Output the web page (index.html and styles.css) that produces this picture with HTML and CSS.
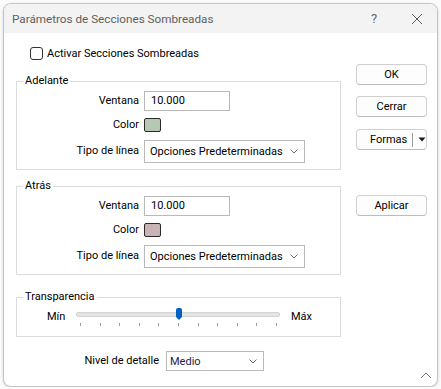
FILE: index.html
```html
<!DOCTYPE html>
<html lang="es">
<head>
    <meta charset="UTF-8">
    <title>Parámetros de Secciones Sombreadas</title>
    <link rel="stylesheet" href="styles.css">
</head>
<body>
<div class="dialog">
    <div class="titlebar">
        <span class="title">Parámetros de Secciones Sombreadas</span>
        <span class="help">?</span>
        <span class="close">
            <svg width="12" height="12" viewBox="0 0 12 12"><path d="M1 1 L11 11 M11 1 L1 11" stroke="#5c5c5c" stroke-width="1" fill="none"/></svg>
        </span>
    </div>

    <div class="content">
        <div class="main">
            <label class="check"><span class="box"></span>Activar Secciones Sombreadas</label>

            <fieldset class="group">
                <legend>Adelante</legend>
                <div class="rows">
                    <span class="lbl">Ventana</span>
                    <div class="field">10.000</div>
                    <span class="lbl">Color</span>
                    <span class="swatch green"></span>
                    <span class="lbl">Tipo de línea</span>
                    <div class="select wide"><span>Opciones Predeterminadas</span>
                        <svg class="chev" width="8" height="5" viewBox="0 0 8 5"><path d="M0.5 0.5 L4 4 L7.5 0.5" stroke="#6a6a6a" fill="none"/></svg>
                    </div>
                </div>
            </fieldset>

            <fieldset class="group">
                <legend>Atrás</legend>
                <div class="rows">
                    <span class="lbl">Ventana</span>
                    <div class="field">10.000</div>
                    <span class="lbl">Color</span>
                    <span class="swatch rose"></span>
                    <span class="lbl">Tipo de línea</span>
                    <div class="select wide"><span>Opciones Predeterminadas</span>
                        <svg class="chev" width="8" height="5" viewBox="0 0 8 5"><path d="M0.5 0.5 L4 4 L7.5 0.5" stroke="#6a6a6a" fill="none"/></svg>
                    </div>
                </div>
            </fieldset>

            <fieldset class="group trans">
                <legend>Transparencia</legend>
                <div class="slider-row">
                    <span class="end min">Mín</span>
                    <div class="slider">
                        <div class="track"><span class="thumb"></span></div>
                        <div class="ticks">
                            <i></i><i></i><i></i><i></i><i></i><i></i><i></i><i></i><i></i><i></i><i></i>
                        </div>
                    </div>
                    <span class="end">Máx</span>
                </div>
            </fieldset>

            <div class="detail">
                <span class="lbl">Nivel de detalle</span>
                <div class="select small"><span class="sel-text">Medio</span>
                    <svg class="chev" width="8" height="5" viewBox="0 0 8 5"><path d="M0.5 0.5 L4 4 L7.5 0.5" stroke="#6a6a6a" fill="none"/></svg>
                </div>
            </div>
        </div>

        <div class="side">
            <button class="btn ok">OK</button>
            <button class="btn cerrar">Cerrar</button>
            <button class="btn formas"><span class="btn-label">Formas</span><span class="split"></span>
                <svg width="8" height="5" viewBox="0 0 8 5"><path d="M0.5 0.5 L7.5 0.5 L4 4.5 Z" fill="#1a1a1a"/></svg>
            </button>
            <button class="btn aplicar">Aplicar</button>
        </div>
    </div>

    <svg class="grip" width="12" height="7" viewBox="0 0 12 7"><path d="M1 6 L6 1 L11 6" stroke="#777" fill="none"/></svg>
</div>
</body>
</html>
```

FILE: styles.css
```css
body {
    margin: 0;
    background: #fbfbfb;
    font-family: 'Roboto', 'Open Sans', sans-serif;
    font-size: 11px;
    color: #000;
}

.dialog {
    position: relative;
    margin: 3px 0 0 3px;
    width: 433px;
    height: 382px;
    background: #fff;
    border: 1px solid #c4c4c4;
    border-radius: 8px;
    box-shadow: 0 1px 3px rgba(0, 0, 0, 0.15);
    overflow: hidden;
}

.titlebar {
    display: flex;
    align-items: center;
    height: 29px;
    background: #f3f3f3;
    padding-left: 8px;
    color: #5f5f5f;
    font-size: 11.7px;
}
.title {
    flex: 1;
}
.help {
    width: 12px;
    margin-right: 28px;
    font-size: 13px;
    color: #6a6a6a;
}
.close {
    display: flex;
    margin-right: 14px;
}

.content {
    display: flex;
    gap: 15px;
    padding: 12px 0 0 12px;
}

.main {
    width: 325px;
    display: flex;
    flex-direction: column;
}

.check {
    display: flex;
    align-items: center;
    gap: 4px;
    height: 16px;
    margin-left: 14px;
}
.box {
    width: 11px;
    height: 11px;
    border: 1px solid #333;
    border-radius: 3px;
    background: #fff;
}

.group {
    margin: 12px 0 0;
    padding: 2px 0 6px;
    border: 1px solid #dcdcdc;
    border-radius: 0;
}
.group + .group {
    margin-top: 8px;
}
.group legend {
    margin-left: 6px;
    padding: 0 2px;
    line-height: 16px;
}
.group.trans {
    margin-top: 14px;
    padding: 3px 0 10px;
}

.rows {
    display: grid;
    grid-template-columns: 122px auto;
    column-gap: 5px;
    row-gap: 6px;
    align-items: center;
    justify-items: start;
}
.lbl {
    justify-self: end;
    line-height: 16px;
}

.field {
    width: 78px;
    height: 18px;
    line-height: 18px;
    padding-left: 6px;
    border: 1px solid #b9b9b9;
}

.swatch {
    width: 15px;
    height: 12px;
    border: 1px solid #2a2a2a;
    border-radius: 2px;
}
.swatch.green {
    background: #b4c8b4;
}
.swatch.rose {
    background: #c8b4b4;
}

.select {
    display: flex;
    align-items: center;
    justify-content: space-between;
    height: 20px;
    padding: 0 6px 0 5px;
    border: 1px solid #b9b9b9;
    background: #fff;
    white-space: nowrap;
}
.select.wide {
    width: 148px;
    height: 21px;
    margin-top: 1px;
}
.select.small {
    width: 87px;
    height: 18px;
    padding-left: 3px;
}
.sel-text {
    color: #1c1c4a;
}

.slider-row {
    display: flex;
    align-items: flex-start;
    padding-left: 30px;
}
.end {
    line-height: 16px;
    margin-top: 1px;
}
.end.min {
    width: 29px;
}
.slider {
    width: 204px;
    margin-right: 11px;
}
.track {
    position: relative;
    height: 3px;
    margin-top: 4px;
    background: #e4e4e4;
    border: 1px solid #d4d4d4;
    border-radius: 2px;
}
.thumb {
    position: absolute;
    left: 99px;
    top: -5px;
    width: 6px;
    height: 9px;
    background: #0063c4;
    border-radius: 2px 2px 0 0;
}
.thumb::after {
    content: '';
    position: absolute;
    left: 0;
    top: 9px;
    border-left: 3px solid transparent;
    border-right: 3px solid transparent;
    border-top: 3px solid #0063c4;
}
.ticks {
    display: flex;
    justify-content: space-between;
    padding: 0 3px 0 4px;
    margin-top: 6px;
}
.ticks i {
    display: block;
    width: 1px;
    height: 3px;
    background: #9a9a9a;
}

.detail {
    display: grid;
    grid-template-columns: 143px auto;
    column-gap: 7px;
    align-items: center;
    justify-items: start;
    margin-top: 14px;
}

.side {
    display: flex;
    flex-direction: column;
    width: 71px;
    padding-top: 19px;
}
.btn {
    height: 21px;
    padding: 0;
    font-family: inherit;
    font-size: 11px;
    color: #000;
    background: #fdfdfd;
    border: 1px solid #d0d0d0;
    border-bottom-color: #bdbdbd;
    border-radius: 4px;
}
.cerrar {
    margin-top: 11px;
}
.formas {
    margin-top: 12px;
    display: flex;
    align-items: center;
    padding-left: 13px;
}
.btn-label {
    width: 42px;
    text-align: left;
}
.split {
    width: 1px;
    height: 14px;
    background: #9a9a9a;
    margin-right: 5px;
}
.aplicar {
    margin-top: 45px;
}

.grip {
    position: absolute;
    right: 5px;
    bottom: 7px;
}
```
